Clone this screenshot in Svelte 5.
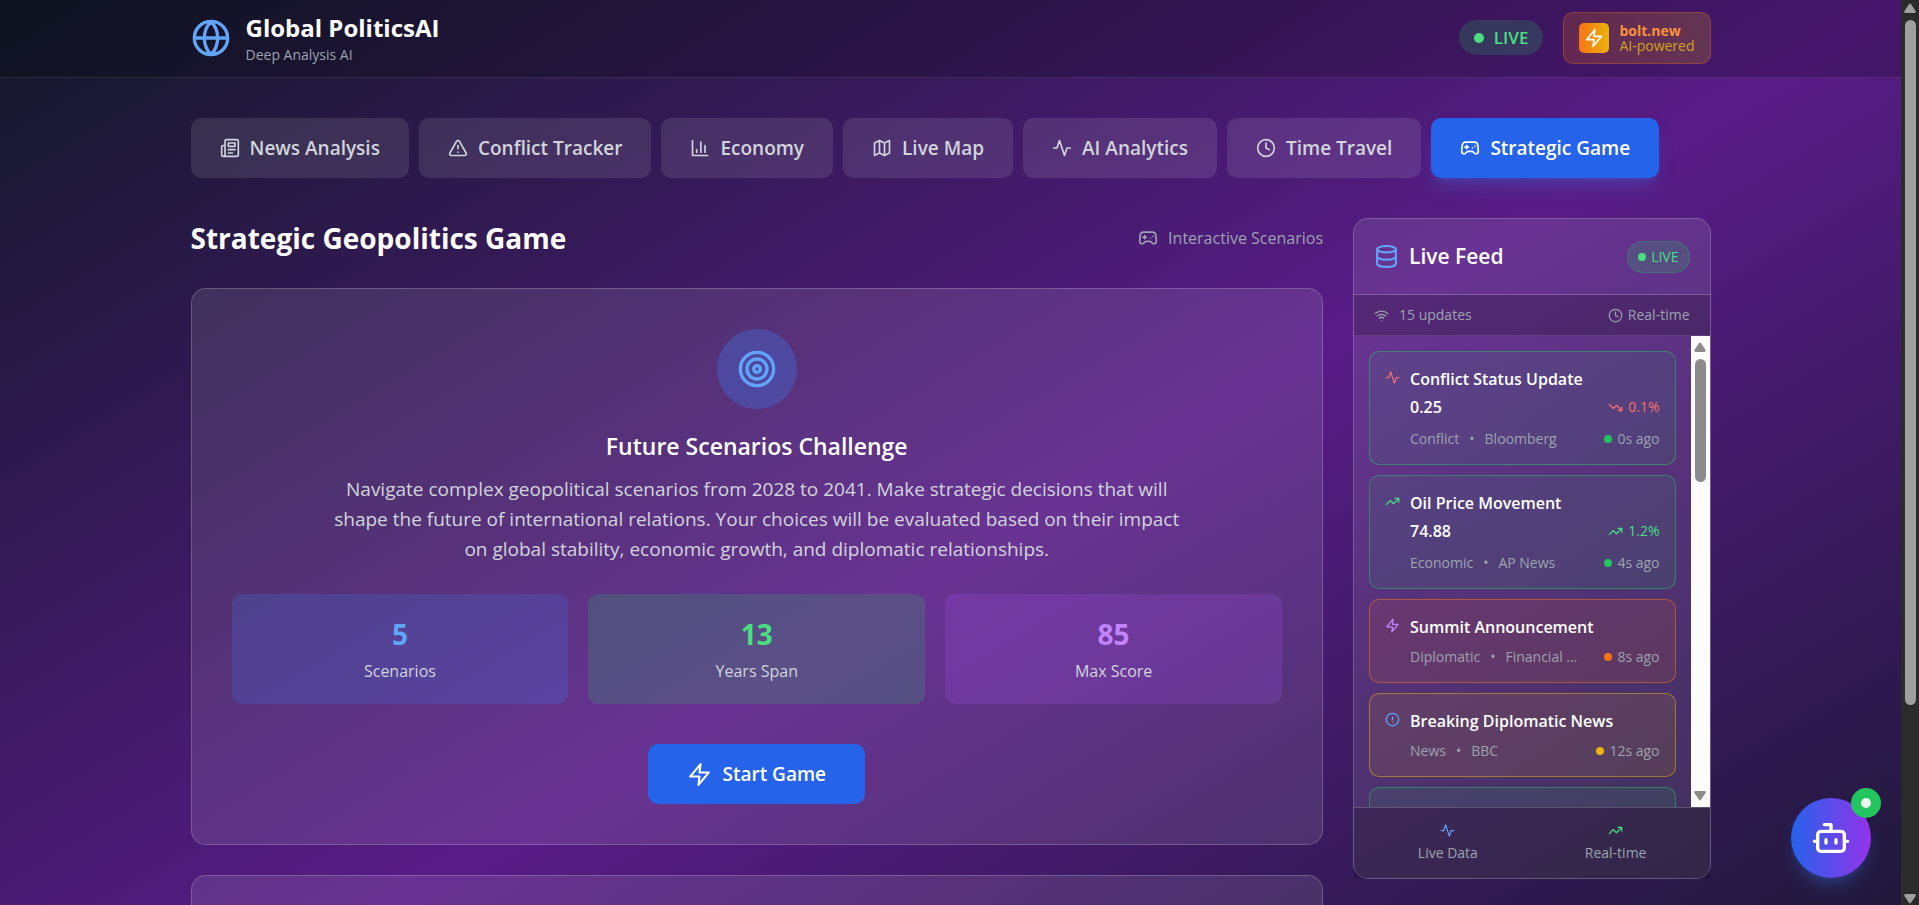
<script lang="ts">
    type FeedItem = {
        icon: string;
        tone: string;
        level: string;
        title: string;
        value?: string;
        trend?: 'up' | 'down';
        change?: string;
        category: string;
        source: string;
        ago: string;
    };

    // Stroke icons on a 24x24 grid
    const icons: Record<string, string> = {
        globe: 'M12 2a10 10 0 1 0 0 20a10 10 0 1 0 0-20M12 2a14.5 14.5 0 0 0 0 20 14.5 14.5 0 0 0 0-20M2 12h20',
        news: 'M4 22h16a2 2 0 0 0 2-2V4a2 2 0 0 0-2-2H8a2 2 0 0 0-2 2v16a2 2 0 0 1-2 2Zm0 0a2 2 0 0 1-2-2v-9c0-1.1.9-2 2-2h2M18 14h-8M15 18h-5M10 6h8v4h-8V6Z',
        warning: 'm21.73 18-8-14a2 2 0 0 0-3.48 0l-8 14A2 2 0 0 0 4 21h16a2 2 0 0 0 1.73-3ZM12 9v4M12 17h.01',
        chart: 'M3 3v18h18M18 17V9M13 17V5M8 17v-3',
        map: 'M3 6l6-3 6 3 6-3v15l-6 3-6-3-6 3ZM9 3v15M15 6v15',
        activity: 'M22 12h-4l-3 9L9 3l-3 9H2',
        clock: 'M12 2a10 10 0 1 0 0 20a10 10 0 1 0 0-20M12 6v6l4 2',
        gamepad: 'M6 11h4M8 9v4M15 12h.01M18 10h.01M17.32 5H6.68a4 4 0 0 0-3.978 3.59c-.006.052-.01.101-.017.152C2.604 9.416 2 14.456 2 16a3 3 0 0 0 3 3c1 0 1.5-.5 2-1l1.414-1.414A2 2 0 0 1 9.828 16h4.344a2 2 0 0 1 1.414.586L17 18c.5.5 1 1 2 1a3 3 0 0 0 3-3c0-1.545-.604-6.584-.685-7.258-.007-.05-.011-.1-.017-.151A4 4 0 0 0 17.32 5z',
        database: 'M3 5a9 3 0 1 0 18 0a9 3 0 1 0-18 0M3 5v14a9 3 0 0 0 18 0V5M3 12a9 3 0 0 0 18 0',
        wifi: 'M5 13a10 10 0 0 1 14 0M8.5 16.5a5 5 0 0 1 7 0M2 8.8a15 15 0 0 1 20 0M12 20h.01',
        up: 'M22 7l-8.5 8.5-5-5L2 17M16 7h6v6',
        down: 'M22 17l-8.5-8.5-5 5L2 7M16 17h6v-6',
        zap: 'M13 2L3 14h9l-1 8 10-12h-9l1-8z',
        alert: 'M12 2a10 10 0 1 0 0 20a10 10 0 1 0 0-20M12 8v4M12 16h.01',
        target: 'M12 2a10 10 0 1 0 0 20a10 10 0 1 0 0-20M12 6a6 6 0 1 0 0 12a6 6 0 1 0 0-12M12 10a2 2 0 1 0 0 4a2 2 0 1 0 0-4',
        bot: 'M12 8V4H8M6 8h12a2 2 0 0 1 2 2v8a2 2 0 0 1-2 2H6a2 2 0 0 1-2-2v-8a2 2 0 0 1 2-2ZM2 14h2M20 14h2M15 13v2M9 13v2'
    };

    const tabs = [
        { id: 'news', label: 'News Analysis', icon: 'news' },
        { id: 'conflict', label: 'Conflict Tracker', icon: 'warning' },
        { id: 'economy', label: 'Economy', icon: 'chart' },
        { id: 'map', label: 'Live Map', icon: 'map' },
        { id: 'analytics', label: 'AI Analytics', icon: 'activity' },
        { id: 'time', label: 'Time Travel', icon: 'clock' },
        { id: 'game', label: 'Strategic Game', icon: 'gamepad' }
    ];

    const stats = [
        { value: 5, label: 'Scenarios', color: 'blue' },
        { value: 13, label: 'Years Span', color: 'green' },
        { value: 85, label: 'Max Score', color: 'purple' }
    ];

    const feed: FeedItem[] = [
        { icon: 'activity', tone: 'red', level: 'low', title: 'Conflict Status Update', value: '0.25', trend: 'down', change: '0.1%', category: 'Conflict', source: 'Bloomberg', ago: '0s ago' },
        { icon: 'up', tone: 'green', level: 'low', title: 'Oil Price Movement', value: '74.88', trend: 'up', change: '1.2%', category: 'Economic', source: 'AP News', ago: '4s ago' },
        { icon: 'zap', tone: 'purple', level: 'high', title: 'Summit Announcement', category: 'Diplomatic', source: 'Financial Times', ago: '8s ago' },
        { icon: 'alert', tone: 'blue', level: 'medium', title: 'Breaking Diplomatic News', category: 'News', source: 'BBC', ago: '12s ago' },
        { icon: 'zap', tone: 'purple', level: 'low', title: 'Summit Announcement', category: 'Diplomatic', source: 'Reuters', ago: '16s ago' }
    ];

    let activeTab = $state('game');
</script>

{#snippet icon(name: string, size: number)}
    <svg class="icon" width={size} height={size} viewBox="0 0 24 24" aria-hidden="true">
        <path d={icons[name]} />
    </svg>
{/snippet}

{#snippet scrollbar(kind: string)}
    <div class="scrollbar {kind}" aria-hidden="true">
        <svg width="12" height="10" viewBox="0 0 12 10"><path d="M5 1.2Q6 0 7 1.2L11.6 8Q12.2 10 10.4 10H1.6Q-.2 10 .4 8Z" /></svg>
        <div class="track"><div class="thumb"></div></div>
        <svg width="12" height="10" viewBox="0 0 12 10"><path d="M5 8.8Q6 10 7 8.8L11.6 2Q12.2 0 10.4 0H1.6Q-.2 0 .4 2Z" /></svg>
    </div>
{/snippet}

<div class="shell">
    <div class="scroller">
        <div class="page">
            <header>
                <div class="container header-row">
                    <div class="brand">
                        <span class="blue">{@render icon('globe', 40)}</span>
                        <div>
                            <h1>Global PoliticsAI</h1>
                            <p>Deep Analysis AI</p>
                        </div>
                    </div>
                    <div class="header-right">
                        <div class="live-pill"><span class="dot"></span>LIVE</div>
                        <a class="bolt" href="https://bolt.new">
                            <span class="bolt-icon">{@render icon('zap', 20)}</span>
                            <span class="bolt-text"><strong>bolt.new</strong><span>AI-powered</span></span>
                        </a>
                    </div>
                </div>
            </header>

            <div class="container body">
                <nav>
                    {#each tabs as tab}
                        <button class="tab" class:active={activeTab === tab.id} onclick={() => (activeTab = tab.id)}>
                            {@render icon(tab.icon, 20)}
                            {tab.label}
                        </button>
                    {/each}
                </nav>

                <div class="columns">
                    <main>
                        <div class="title-row">
                            <h2>Strategic Geopolitics Game</h2>
                            <div class="hint">{@render icon('gamepad', 20)}Interactive Scenarios</div>
                        </div>

                        <section class="panel intro">
                            <div class="target blue">{@render icon('target', 40)}</div>
                            <h3>Future Scenarios Challenge</h3>
                            <p>
                                Navigate complex geopolitical scenarios from 2028 to 2041. Make strategic decisions that will
                                shape the future of international relations. Your choices will be evaluated based on their impact
                                on global stability, economic growth, and diplomatic relationships.
                            </p>
                            <div class="stats">
                                {#each stats as stat}
                                    <div class="stat stat-{stat.color}">
                                        <div class="number {stat.color}">{stat.value}</div>
                                        <div class="label">{stat.label}</div>
                                    </div>
                                {/each}
                            </div>
                            <button class="start">{@render icon('zap', 25)}Start Game</button>
                        </section>

                        <section class="panel next"></section>
                    </main>

                    <aside class="panel feed">
                        <div class="feed-head">
                            <span class="blue">{@render icon('database', 25)}</span>
                            <h3>Live Feed</h3>
                            <div class="feed-live"><span class="dot"></span>LIVE</div>
                        </div>
                        <div class="feed-sub">
                            <span class="updates">{@render icon('wifi', 15)}15 updates</span>
                            <span class="realtime">{@render icon('clock', 15)}Real-time</span>
                        </div>
                        <div class="feed-body">
                            <div class="feed-list">
                                {#each feed as item}
                                    <article class="item {item.level}">
                                        <span class="item-icon {item.tone}">{@render icon(item.icon, 15)}</span>
                                        <div class="item-main">
                                            <h4>{item.title}</h4>
                                            {#if item.value}
                                                <div class="value-row">
                                                    <span>{item.value}</span>
                                                    <span class="change {item.trend === 'up' ? 'green' : 'red'}">
                                                        {@render icon(item.trend ?? 'up', 15)}{item.change}
                                                    </span>
                                                </div>
                                            {/if}
                                            <div class="meta">
                                                <span>{item.category}</span>
                                                <span>•</span>
                                                <span class="source">{item.source}</span>
                                                <span class="ago"><span class="dot"></span>{item.ago}</span>
                                            </div>
                                        </div>
                                    </article>
                                {/each}
                            </div>
                            {@render scrollbar('light')}
                        </div>
                        <div class="feed-foot">
                            <div><span class="blue">{@render icon('activity', 15)}</span>Live Data</div>
                            <div><span class="green">{@render icon('up', 15)}</span>Real-time</div>
                        </div>
                    </aside>
                </div>
            </div>
        </div>
    </div>
    {@render scrollbar('dark')}
    <button class="chat" aria-label="Open assistant">
        {@render icon('bot', 40)}
        <span class="badge"><span class="dot"></span></span>
    </button>
</div>

<style>
    :global(body) {
        margin: 0;
        background: #111827;
    }

    .shell {
        display: flex;
        height: 100vh;
        font-family: 'Segoe UI', 'Open Sans', 'Noto Sans', sans-serif;
        font-size: 19px;
        line-height: 30px;
        color: #fff;
    }

    .shell * {
        box-sizing: border-box;
    }

    h1, h2, h3, h4, p {
        margin: 0;
    }

    button {
        border: 0;
        font: inherit;
        color: inherit;
        cursor: pointer;
    }

    .icon {
        display: block;
        flex: none;
        fill: none;
        stroke: currentColor;
        stroke-width: 2;
        stroke-linecap: round;
        stroke-linejoin: round;
    }

    .blue { color: #60a5fa; }
    .green { color: #4ade80; }
    .purple { color: #c084fc; }
    .red { color: #f87171; }

    .dot {
        flex: none;
        width: 10px;
        height: 10px;
        border-radius: 50%;
        background: #4ade80;
    }

    /* Page scrolls inside the shell, the bar sits beside it */
    .scroller {
        flex: 1;
        min-width: 0;
        overflow-y: auto;
        scrollbar-width: none;
    }

    .page {
        min-height: 100%;
        background: linear-gradient(to bottom right, #111827, #581c87, #111827);
    }

    .container {
        max-width: 1600px;
        margin: 0 auto;
        padding: 0 40px;
    }

    header {
        padding: 10px 0 12px;
        background: rgba(0, 0, 0, 0.2);
        border-bottom: 1px solid rgba(255, 255, 255, 0.1);
    }

    .header-row, .brand, .header-right {
        display: flex;
        align-items: center;
    }

    .header-row {
        justify-content: space-between;
    }

    .brand {
        gap: 15px;
    }

    h1 {
        font-size: 24px;
        line-height: 35px;
        font-weight: 700;
    }

    .brand p {
        font-size: 14px;
        line-height: 20px;
        color: #9ca3af;
    }

    .header-right {
        gap: 20px;
    }

    .live-pill {
        display: flex;
        align-items: center;
        gap: 10px;
        padding: 5px 15px;
        border-radius: 18px;
        background: rgba(34, 197, 94, 0.2);
        color: #4ade80;
        font-size: 17px;
        line-height: 25px;
        font-weight: 600;
    }

    .bolt {
        display: flex;
        gap: 10px;
        padding: 10px 15px;
        border: 1px solid rgba(249, 115, 22, 0.3);
        border-radius: 10px;
        background: linear-gradient(to right, rgba(249, 115, 22, 0.2), rgba(234, 179, 8, 0.2));
        text-decoration: none;
    }

    .bolt-icon {
        display: grid;
        place-items: center;
        width: 30px;
        height: 30px;
        border-radius: 5px;
        background: linear-gradient(to right, #f97316, #eab308);
        color: #fff;
    }

    .bolt-text {
        display: grid;
        font-size: 14px;
        line-height: 15px;
        color: #d1a31b;
    }

    .bolt-text strong {
        color: #fb923c;
    }

    .body {
        padding: 40px;
    }

    nav {
        display: flex;
        flex-wrap: wrap;
        gap: 10px;
        margin-bottom: 40px;
    }

    .tab {
        display: flex;
        align-items: center;
        gap: 10px;
        padding: 15px 29px;
        border-radius: 10px;
        background: rgba(255, 255, 255, 0.1);
        color: #d1d5db;
        font-weight: 600;
        white-space: nowrap;
    }

    .tab.active {
        background: #2563eb;
        color: #fff;
        box-shadow: 0 12px 18px -4px rgba(59, 130, 246, 0.25), 0 5px 8px -5px rgba(59, 130, 246, 0.25);
    }

    .columns {
        display: grid;
        grid-template-columns: repeat(4, 1fr);
        align-items: start;
        gap: 30px;
    }

    main {
        grid-column: span 3;
        display: grid;
        gap: 30px;
    }

    .title-row {
        display: flex;
        align-items: center;
        justify-content: space-between;
    }

    h2 {
        font-size: 28px;
        line-height: 40px;
        font-weight: 700;
    }

    .hint {
        display: flex;
        align-items: center;
        gap: 10px;
        font-size: 16px;
        color: #9ca3af;
    }

    .panel {
        border: 1px solid rgba(255, 255, 255, 0.2);
        border-radius: 15px;
        background: rgba(255, 255, 255, 0.1);
    }

    .intro {
        padding: 40px;
        text-align: center;
    }

    .target {
        display: grid;
        place-items: center;
        width: 80px;
        height: 80px;
        margin: 0 auto 20px;
        border-radius: 50%;
        background: rgba(59, 130, 246, 0.3);
    }

    .intro h3 {
        margin-bottom: 10px;
        font-size: 23px;
        line-height: 35px;
        font-weight: 600;
    }

    .intro p {
        max-width: 860px;
        margin: 0 auto 30px;
        color: #d1d5db;
    }

    .stats {
        display: grid;
        grid-template-columns: repeat(3, 1fr);
        gap: 20px;
        margin-bottom: 40px;
    }

    .stat {
        padding: 20px;
        border-radius: 10px;
    }

    .stat-blue { background: rgba(59, 130, 246, 0.2); }
    .stat-green { background: rgba(34, 197, 94, 0.2); }
    .stat-purple { background: rgba(168, 85, 247, 0.2); }

    .number {
        margin-bottom: 5px;
        font-size: 28px;
        line-height: 40px;
        font-weight: 700;
    }

    .label {
        font-size: 16px;
        line-height: 25px;
        color: #d1d5db;
    }

    .start {
        display: inline-flex;
        align-items: center;
        gap: 10px;
        padding: 15px 39px;
        border-radius: 10px;
        background: #2563eb;
        font-weight: 600;
        vertical-align: top;
    }

    .next {
        min-height: 226px;
    }

    .feed-head {
        display: flex;
        align-items: center;
        gap: 10px;
        padding: 20px;
        border-bottom: 1px solid rgba(255, 255, 255, 0.2);
    }

    .feed-head h3 {
        flex: 1;
        font-size: 21px;
        line-height: 35px;
        font-weight: 600;
    }

    .feed-live {
        display: flex;
        align-items: center;
        gap: 5px;
        padding: 5px 10px;
        border: 1px solid rgba(34, 197, 94, 0.3);
        border-radius: 16px;
        background: rgba(34, 197, 94, 0.2);
        color: #4ade80;
        font-size: 14px;
        line-height: 20px;
    }

    .feed-live .dot, .ago .dot {
        width: 8px;
        height: 8px;
    }

    .feed-sub {
        display: flex;
        justify-content: space-between;
        padding: 10px 20px;
        border-bottom: 1px solid rgba(255, 255, 255, 0.1);
        background: rgba(0, 0, 0, 0.2);
        font-size: 14px;
        line-height: 20px;
        color: #9ca3af;
    }

    .updates, .realtime {
        display: flex;
        align-items: center;
        gap: 10px;
    }

    .realtime {
        gap: 5px;
    }

    .feed-body {
        display: flex;
        height: 471px;
    }

    .feed-list {
        flex: 1;
        min-width: 0;
        display: flex;
        flex-direction: column;
        gap: 10px;
        padding: 15px;
        overflow-y: auto;
        scrollbar-width: none;
    }

    .item {
        flex: none;
        display: flex;
        gap: 10px;
        padding: 15px;
        border: 1px solid;
        border-radius: 10px;
    }

    .low {
        border-color: rgba(34, 197, 94, 0.5);
        background: rgba(34, 197, 94, 0.1);
    }

    .high {
        border-color: rgba(249, 115, 22, 0.5);
        background: rgba(249, 115, 22, 0.1);
    }

    .medium {
        border-color: rgba(234, 179, 8, 0.5);
        background: rgba(234, 179, 8, 0.1);
    }

    .low .dot { background: #22c55e; }
    .high .dot { background: #f97316; }
    .medium .dot { background: #eab308; }

    .item-icon {
        padding-top: 3px;
    }

    .item-main {
        flex: 1;
        min-width: 0;
    }

    h4, .value-row {
        font-size: 16px;
        line-height: 24px;
        font-weight: 600;
    }

    .value-row {
        display: flex;
        justify-content: space-between;
        align-items: center;
        margin: 4px 0 10px;
    }

    .change {
        display: flex;
        align-items: center;
        gap: 5px;
        font-size: 14px;
        font-weight: 400;
    }

    .meta {
        display: flex;
        gap: 10px;
        margin-top: 8px;
        font-size: 14px;
        line-height: 20px;
        color: #9ca3af;
    }

    .source {
        max-width: 75px;
        overflow: hidden;
        text-overflow: ellipsis;
        white-space: nowrap;
    }

    .ago {
        display: flex;
        align-items: center;
        gap: 5px;
        margin-left: auto;
        white-space: nowrap;
    }

    .feed-foot {
        display: grid;
        grid-template-columns: 1fr 1fr;
        gap: 20px;
        padding: 15px 20px;
        border-top: 1px solid rgba(255, 255, 255, 0.2);
        background: rgba(0, 0, 0, 0.2);
        font-size: 14px;
        line-height: 20px;
        color: #9ca3af;
    }

    .feed-foot div {
        display: flex;
        flex-direction: column;
        align-items: center;
        gap: 5px;
    }

    .scrollbar {
        flex: none;
        display: flex;
        flex-direction: column;
        align-items: center;
        gap: 7px;
        width: 18px;
        padding: 3px 0 1px;
        background: #2b2b2b;
        --thumb: #9f9f9f;
        --share: 79%;
    }

    .scrollbar.light {
        width: 19px;
        padding: 6px 0;
        background: #fcfcfc;
        --thumb: #8b8b8b;
        --share: 29%;
    }

    .scrollbar svg {
        flex: none;
        fill: var(--thumb);
    }

    .track {
        flex: 1;
    }

    .thumb {
        width: 11px;
        height: var(--share);
        border-radius: 6px;
        background: var(--thumb);
    }

    .chat {
        position: fixed;
        right: 48px;
        bottom: 27px;
        display: grid;
        place-items: center;
        width: 80px;
        height: 80px;
        padding: 0;
        border-radius: 50%;
        background: linear-gradient(to right, #2563eb, #9333ea);
        box-shadow: 0 12px 18px -4px rgba(59, 130, 246, 0.25), 0 5px 8px -5px rgba(59, 130, 246, 0.25);
    }

    .badge {
        position: absolute;
        top: -10px;
        right: -10px;
        display: grid;
        place-items: center;
        width: 30px;
        height: 30px;
        border-radius: 50%;
        background: #22c55e;
    }

    .badge .dot {
        background: #e9f9ef;
    }
</style>
